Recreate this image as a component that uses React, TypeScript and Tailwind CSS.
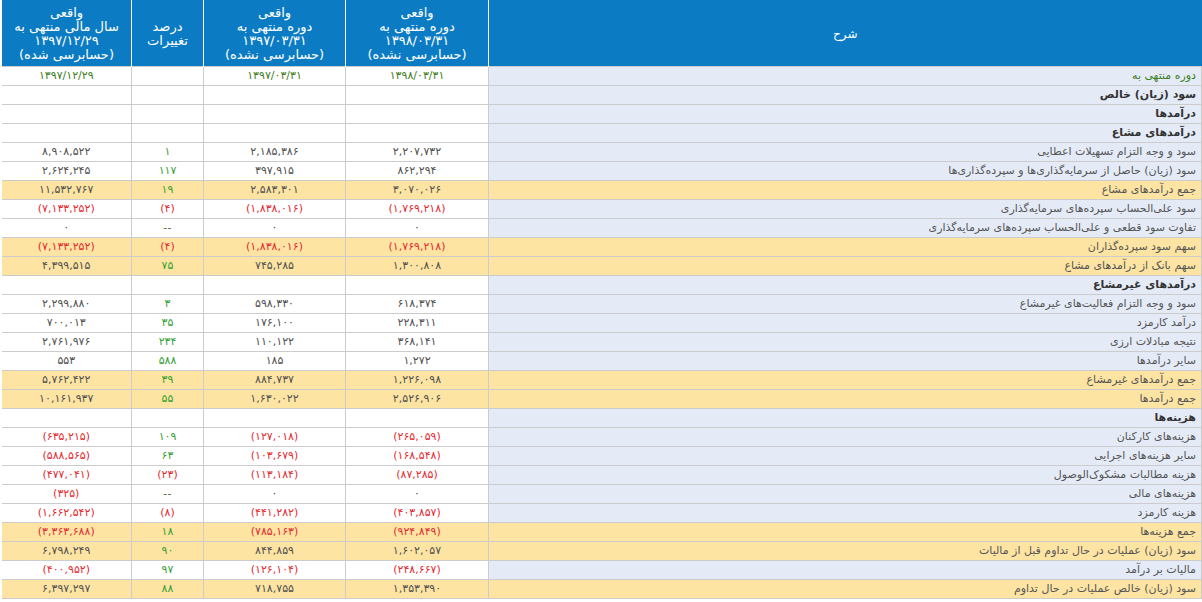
import React from "react";

type Row = {
  label: string;
  kind?: "date" | "head";
  total?: boolean;
  vals?: [string, string, string, string];
};

const rows: Row[] = [
  { label: "دوره منتهی به", kind: "date", vals: ["۱۳۹۸/۰۳/۳۱", "۱۳۹۷/۰۳/۳۱", "", "۱۳۹۷/۱۲/۲۹"] },
  { label: "سود (زیان) خالص", kind: "head" },
  { label: "درآمدها", kind: "head" },
  { label: "درآمدهای مشاع", kind: "head" },
  { label: "سود و وجه التزام تسهیلات اعطایی", vals: ["۲,۲۰۷,۷۳۲", "۲,۱۸۵,۳۸۶", "۱", "۸,۹۰۸,۵۲۲"] },
  { label: "سود (زیان) حاصل از سرمایه‌گذاری‌ها و سپرده‌گذاری‌ها", vals: ["۸۶۲,۲۹۴", "۳۹۷,۹۱۵", "۱۱۷", "۲,۶۲۴,۲۴۵"] },
  { label: "جمع درآمدهای مشاع", total: true, vals: ["۳,۰۷۰,۰۲۶", "۲,۵۸۳,۳۰۱", "۱۹", "۱۱,۵۳۲,۷۶۷"] },
  { label: "سود علی‌الحساب سپرده‌های سرمایه‌گذاری", vals: ["(۱,۷۶۹,۲۱۸)", "(۱,۸۳۸,۰۱۶)", "(۴)", "(۷,۱۳۳,۲۵۲)"] },
  { label: "تفاوت سود قطعی و علی‌الحساب سپرده‌های سرمایه‌گذاری", vals: ["۰", "۰", "--", "۰"] },
  { label: "سهم سود سپرده‌گذاران", total: true, vals: ["(۱,۷۶۹,۲۱۸)", "(۱,۸۳۸,۰۱۶)", "(۴)", "(۷,۱۳۳,۲۵۲)"] },
  { label: "سهم بانک از درآمدهای مشاع", total: true, vals: ["۱,۳۰۰,۸۰۸", "۷۴۵,۲۸۵", "۷۵", "۴,۳۹۹,۵۱۵"] },
  { label: "درآمدهای غیرمشاع", kind: "head" },
  { label: "سود و وجه التزام فعالیت‌های غیرمشاع", vals: ["۶۱۸,۳۷۴", "۵۹۸,۳۳۰", "۳", "۲,۲۹۹,۸۸۰"] },
  { label: "درآمد کارمزد", vals: ["۲۲۸,۳۱۱", "۱۷۶,۱۰۰", "۳۵", "۷۰۰,۰۱۳"] },
  { label: "نتیجه مبادلات ارزی", vals: ["۳۶۸,۱۴۱", "۱۱۰,۱۲۲", "۲۳۴", "۲,۷۶۱,۹۷۶"] },
  { label: "سایر درآمدها", vals: ["۱,۲۷۲", "۱۸۵", "۵۸۸", "۵۵۳"] },
  { label: "جمع درآمدهای غیرمشاع", total: true, vals: ["۱,۲۲۶,۰۹۸", "۸۸۴,۷۳۷", "۳۹", "۵,۷۶۲,۴۲۲"] },
  { label: "جمع درآمدها", total: true, vals: ["۲,۵۲۶,۹۰۶", "۱,۶۳۰,۰۲۲", "۵۵", "۱۰,۱۶۱,۹۳۷"] },
  { label: "هزینه‌ها", kind: "head" },
  { label: "هزینه‌های کارکنان", vals: ["(۲۶۵,۰۵۹)", "(۱۲۷,۰۱۸)", "۱۰۹", "(۶۳۵,۲۱۵)"] },
  { label: "سایر هزینه‌های اجرایی", vals: ["(۱۶۸,۵۴۸)", "(۱۰۳,۶۷۹)", "۶۳", "(۵۸۸,۵۶۵)"] },
  { label: "هزینه مطالبات مشکوک‌الوصول", vals: ["(۸۷,۲۸۵)", "(۱۱۳,۱۸۴)", "(۲۳)", "(۴۷۷,۰۴۱)"] },
  { label: "هزینه‌های مالی", vals: ["۰", "۰", "--", "(۳۲۵)"] },
  { label: "هزینه کارمزد", vals: ["(۴۰۳,۸۵۷)", "(۴۴۱,۲۸۲)", "(۸)", "(۱,۶۶۲,۵۴۲)"] },
  { label: "جمع هزینه‌ها", total: true, vals: ["(۹۲۴,۸۴۹)", "(۷۸۵,۱۶۳)", "۱۸", "(۳,۳۶۳,۶۸۸)"] },
  { label: "سود (زیان) عملیات در حال تداوم قبل از مالیات", total: true, vals: ["۱,۶۰۲,۰۵۷", "۸۴۴,۸۵۹", "۹۰", "۶,۷۹۸,۲۴۹"] },
  { label: "مالیات بر درآمد", vals: ["(۲۴۸,۶۶۷)", "(۱۲۶,۱۰۴)", "۹۷", "(۴۰۰,۹۵۲)"] },
  { label: "سود (زیان) خالص عملیات در حال تداوم", total: true, vals: ["۱,۳۵۳,۳۹۰", "۷۱۸,۷۵۵", "۸۸", "۶,۳۹۷,۲۹۷"] },
];

function valueColor(v: string, isPercent: boolean, isDate: boolean) {
  if (isDate) return "text-[#3f7d22]";
  if (v.startsWith("(")) return "text-[#e52a30]";
  if (isPercent) return v === "--" ? "text-[#4d6a40]" : "text-[#34a034]";
  return "text-[#505050]";
}

function HeaderCell({ lines }: { lines: string[] }) {
  return (
    <th className="border-l border-white bg-[#0b7cc4] px-1 pt-[3px] align-middle text-center font-normal text-white text-[13px] leading-[14px]">
      {lines.map((l, i) => (
        <div key={i}>{l}</div>
      ))}
    </th>
  );
}

export default function App() {
  return (
    <div
      dir="rtl"
      className="w-[1202px] h-[602px] overflow-hidden bg-white font-['DejaVu_Sans',sans-serif]"
    >
      <table className="w-[1201px] table-fixed border-collapse text-[11px]">
        <colgroup>
          <col />
          <col className="w-[143px]" />
          <col className="w-[142px]" />
          <col className="w-[72px]" />
          <col className="w-[130px]" />
        </colgroup>
        <thead>
          <tr className="h-[66px]">
            <th className="border-l border-white bg-[#0b7cc4] pt-[3px] text-center align-middle font-normal text-white text-[12px]">
              شرح
            </th>
            <HeaderCell lines={["واقعی", "دوره منتهی به", "۱۳۹۸/۰۳/۳۱", "(حسابرسی نشده)"]} />
            <HeaderCell lines={["واقعی", "دوره منتهی به", "۱۳۹۷/۰۳/۳۱", "(حسابرسی نشده)"]} />
            <HeaderCell lines={["درصد", "تغییرات"]} />
            <HeaderCell lines={["واقعی", "سال مالی منتهی به", "۱۳۹۷/۱۲/۲۹", "(حسابرسی شده)"]} />
          </tr>
        </thead>
        <tbody>
          {rows.map((r, i) => {
            const rowBg = r.total ? "bg-[#fde4a3]" : "";
            return (
              <tr key={i} className={`h-[19px] ${rowBg}`}>
                <td
                  className={`border border-[#cccccc] px-[5px] py-0 leading-[17px] whitespace-nowrap ${
                    r.total ? "" : "bg-[#e4ebf7]"
                  } ${
                    r.kind === "head"
                      ? "font-bold text-[#333]"
                      : r.kind === "date"
                      ? "text-[#3f7d22]"
                      : "text-[#555]"
                  }`}
                >
                  {r.label}
                </td>
                {[0, 1, 2, 3].map((c) => {
                  const v = r.vals ? r.vals[c] : "";
                  return (
                    <td
                      key={c}
                      className={`border border-[#cccccc] px-1 py-0 text-center text-[11px] tracking-[0.4px] leading-[17px] whitespace-nowrap ${
                        c === 3 ? "border-l-0" : ""
                      } ${valueColor(v, c === 2, r.kind === "date")}`}
                    >
                      {v}
                    </td>
                  );
                })}
              </tr>
            );
          })}
        </tbody>
      </table>
    </div>
  );
}
